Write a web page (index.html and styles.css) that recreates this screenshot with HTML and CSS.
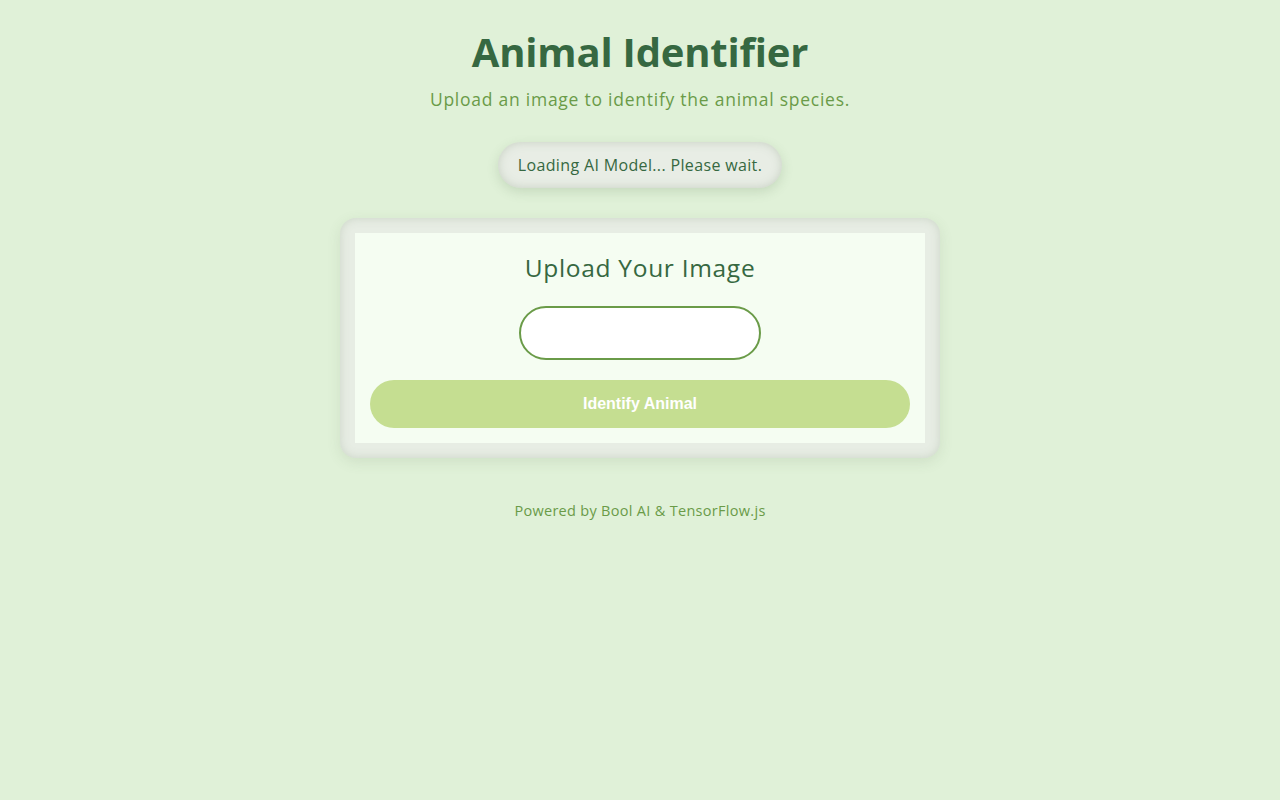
FILE: index.html
```html
<!DOCTYPE html>
<html lang="en">
<head>
<meta charset="utf-8">
<title>Animal Identifier</title>
<link rel="stylesheet" href="styles.css">
</head>
<body>
  <main class="page">
    <header class="header">
      <h1 class="title">Animal Identifier</h1>
      <p class="subtitle">Upload an image to identify the animal species.</p>
    </header>
    <div class="status">Loading AI Model... Please wait.</div>
    <section class="card">
      <div class="card-inner">
        <h2 class="card-title">Upload Your Image</h2>
        <div class="file-input"></div>
        <button class="btn" type="button">Identify Animal</button>
      </div>
    </section>
    <footer class="footer">Powered by Bool AI &amp; TensorFlow.js</footer>
  </main>
</body>
</html>
```

FILE: styles.css
```css
html, body {
  margin: 0;
  padding: 0;
}
body {
  background: #e0f1d8;
  font-family: "Open Sans", "Noto Sans", sans-serif;
  min-height: 800px;
}
.page {
  display: flex;
  flex-direction: column;
  align-items: center;
  padding-top: 28px;
}
.header {
  text-align: center;
}
.title {
  margin: 0;
  font-size: 40px;
  line-height: 48px;
  font-weight: 700;
  color: #366841;
  letter-spacing: -0.2px;
}
.subtitle {
  margin: 12px 0 0;
  font-size: 17.5px;
  line-height: 22px;
  letter-spacing: 0.75px;
  color: #6a9b48;
}
.status {
  margin-top: 32px;
  height: 46px;
  box-sizing: border-box;
  padding: 0 20px;
  display: flex;
  align-items: center;
  border-radius: 23px;
  background: #e8ede5;
  box-shadow: 0 4px 12px rgba(80, 110, 70, 0.18), inset 0 0 10px rgba(190, 200, 185, 0.8);
  color: #366841;
  font-size: 16px;
  letter-spacing: 0.35px;
}
.card {
  margin-top: 30px;
  width: 600px;
  box-sizing: border-box;
  padding: 15px;
  border-radius: 16px;
  background: #e7ede4;
  box-shadow: 0 4px 14px rgba(80, 110, 70, 0.12), inset 0 0 10px rgba(200, 210, 195, 0.9);
}
.card-inner {
  background: #f5fdf2;
  display: flex;
  flex-direction: column;
  align-items: center;
  padding: 20px 15px 15px;
}
.card-title {
  margin: 0;
  font-size: 24.5px;
  line-height: 30px;
  font-weight: 400;
  letter-spacing: 0.7px;
  color: #366841;
}
.file-input {
  margin-top: 23px;
  width: 242px;
  height: 54px;
  box-sizing: border-box;
  border: 2px solid #6a9b48;
  border-radius: 27px;
  background: #ffffff;
}
.btn {
  margin-top: 20px;
  width: 100%;
  height: 48px;
  border: none;
  border-radius: 24px;
  background: #c5de91;
  color: #ffffff;
  font-family: "Liberation Sans", Arial, sans-serif;
  font-weight: 700;
  font-size: 16px;
}
.footer {
  margin-top: 43px;
  font-size: 14.5px;
  line-height: 20px;
  letter-spacing: 0.3px;
  color: #6a9b48;
}
```
